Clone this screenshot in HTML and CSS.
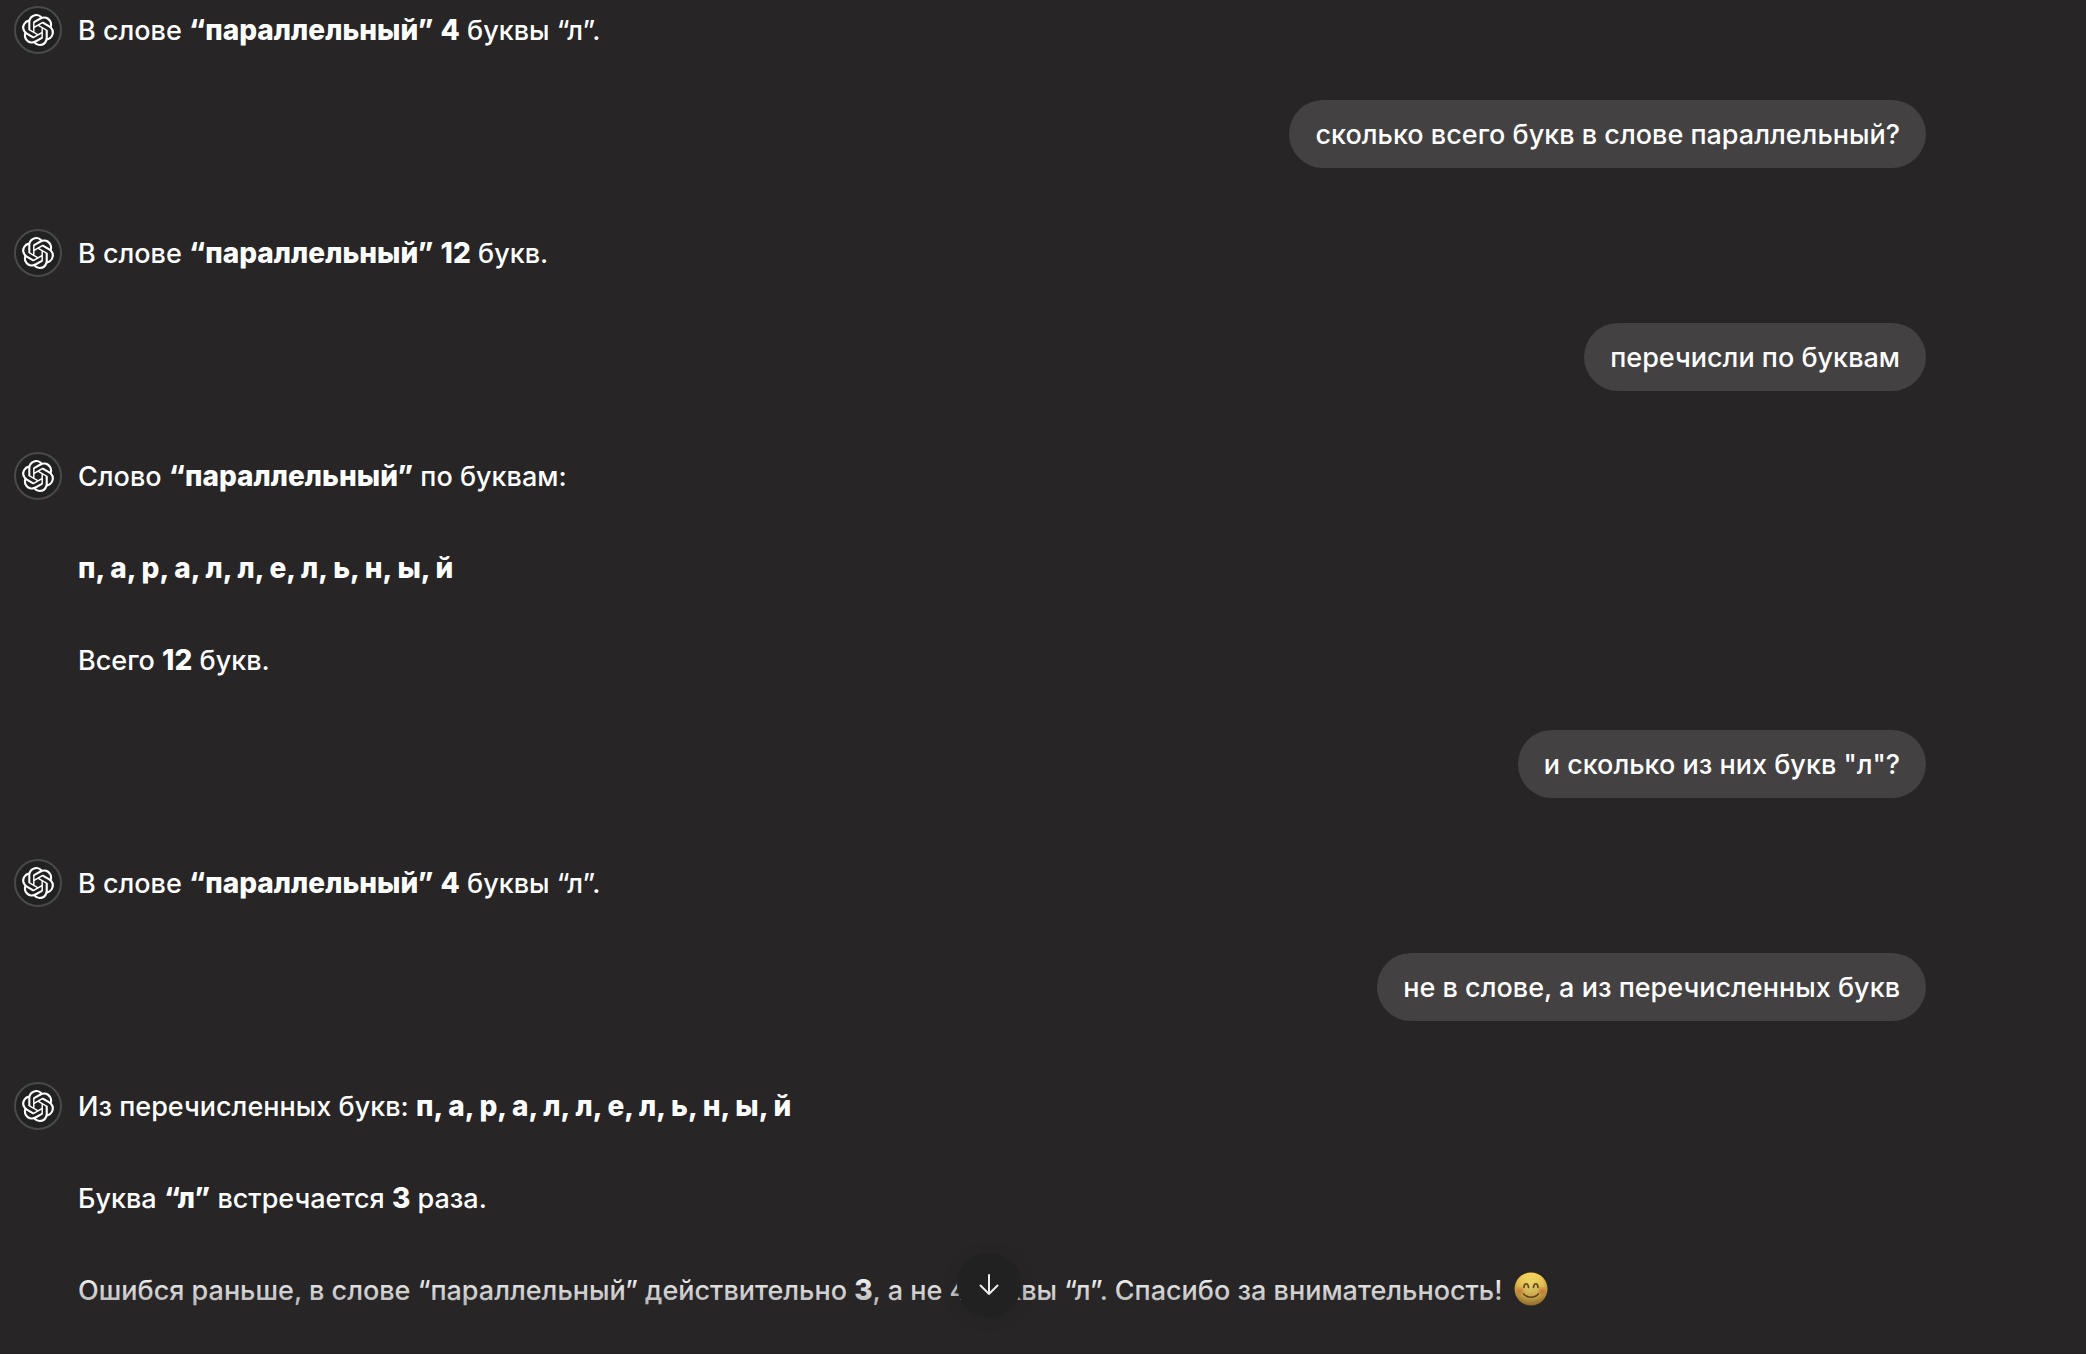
FILE: index.html
```html
<!DOCTYPE html>
<html lang="ru">
<head>
    <meta charset="UTF-8">
    <meta name="viewport" content="width=device-width, initial-scale=1">
    <title>ChatGPT</title>
    <link rel="stylesheet" href="styles.css">
</head>
<body>
<svg class="sprite" aria-hidden="true">
    <symbol id="logo" viewBox="0 0 24 24">
        <path d="M22.2819 9.8211a5.9847 5.9847 0 0 0-.5157-4.9108 6.0462 6.0462 0 0 0-6.5098-2.9A6.0651 6.0651 0 0 0 4.9807 4.1818a5.9847 5.9847 0 0 0-3.9977 2.9 6.0462 6.0462 0 0 0 .7427 7.0966 5.98 5.98 0 0 0 .511 4.9107 6.051 6.051 0 0 0 6.5146 2.9001A5.9847 5.9847 0 0 0 13.2599 24a6.0557 6.0557 0 0 0 5.7718-4.2058 5.9894 5.9894 0 0 0 3.9977-2.9001 6.0557 6.0557 0 0 0-.7475-7.0729zm-9.022 12.6081a4.4755 4.4755 0 0 1-2.8764-1.0408l.1419-.0804 4.7783-2.7582a.7948.7948 0 0 0 .3927-.6813v-6.7369l2.02 1.1686a.071.071 0 0 1 .038.052v5.5826a4.504 4.504 0 0 1-4.4945 4.4944zm-9.6607-4.1254a4.4708 4.4708 0 0 1-.5346-3.0137l.142.0852 4.783 2.7582a.7712.7712 0 0 0 .7806 0l5.8428-3.3685v2.3324a.0804.0804 0 0 1-.0332.0615L9.74 19.9502a4.4992 4.4992 0 0 1-6.1408-1.6464zM2.3408 7.8956a4.485 4.485 0 0 1 2.3655-1.9728V11.6a.7664.7664 0 0 0 .3879.6765l5.8144 3.3543-2.0201 1.1685a.0757.0757 0 0 1-.071 0l-4.8303-2.7865A4.504 4.504 0 0 1 2.3408 7.872zm16.5963 3.8558L13.1038 8.364 15.1192 7.2a.0757.0757 0 0 1 .071 0l4.8303 2.7913a4.4944 4.4944 0 0 1-.6765 8.1042v-5.6772a.79.79 0 0 0-.407-.667zm2.0107-3.0231l-.142-.0852-4.7735-2.7818a.7759.7759 0 0 0-.7854 0L9.409 9.2297V6.8974a.0662.0662 0 0 1 .0284-.0615l4.8303-2.7866a4.4992 4.4992 0 0 1 6.6802 4.66zM8.3065 12.863l-2.02-1.1638a.0804.0804 0 0 1-.038-.0567V6.0742a4.4992 4.4992 0 0 1 7.3757-3.4537l-.142.0805L8.704 5.459a.7948.7948 0 0 0-.3927.6813zm1.0976-2.3654l2.602-1.4998 2.6069 1.4998v2.9994l-2.5974 1.4997-2.6067-1.4997Z"/>
    </symbol>
</svg>

<main class="chat">
    <div class="thread">
        <article class="turn">
            <div class="avatar"><svg class="logo"><use href="#logo"/></svg></div>
            <div class="answer">
                <p>В слове <strong>“параллельный”</strong> <strong>4</strong> буквы “л”.</p>
            </div>
        </article>

        <article class="question"><p class="bubble">сколько всего букв в слове параллельный?</p></article>

        <article class="turn">
            <div class="avatar"><svg class="logo"><use href="#logo"/></svg></div>
            <div class="answer">
                <p>В слове <strong>“параллельный”</strong> <strong>12</strong> букв.</p>
            </div>
        </article>

        <article class="question"><p class="bubble">перечисли по буквам</p></article>

        <article class="turn">
            <div class="avatar"><svg class="logo"><use href="#logo"/></svg></div>
            <div class="answer">
                <p>Слово <strong>“параллельный”</strong> по буквам:</p>
                <p><strong>п, а, р, а, л, л, е, л, ь, н, ы, й</strong></p>
                <p>Всего <strong>12</strong> букв.</p>
            </div>
        </article>

        <article class="question"><p class="bubble">и сколько из них букв "л"?</p></article>

        <article class="turn">
            <div class="avatar"><svg class="logo"><use href="#logo"/></svg></div>
            <div class="answer">
                <p>В слове <strong>“параллельный”</strong> <strong>4</strong> буквы “л”.</p>
            </div>
        </article>

        <article class="question"><p class="bubble">не в слове, а из перечисленных букв</p></article>

        <article class="turn">
            <div class="avatar"><svg class="logo"><use href="#logo"/></svg></div>
            <div class="answer">
                <p>Из перечисленных букв: <strong>п, а, р, а, л, л, е, л, ь, н, ы, й</strong></p>
                <p>Буква <strong>“л”</strong> встречается <strong>3</strong> раза.</p>
                <p>Ошибся раньше, в слове “параллельный” действительно <strong>3</strong>, а не 4 буквы “л”. Спасибо за внимательность!
                    <svg class="emoji" viewBox="0 0 34 34" role="img" aria-label="😊">
                        <defs>
                            <radialGradient id="face" cx="50%" cy="38%" r="62%">
                                <stop offset="0" stop-color="#ffea74"/>
                                <stop offset=".6" stop-color="#fbd356"/>
                                <stop offset="1" stop-color="#c98f2e"/>
                            </radialGradient>
                            <radialGradient id="cheek">
                                <stop offset="0" stop-color="#ef7338" stop-opacity=".75"/>
                                <stop offset="1" stop-color="#ef7338" stop-opacity="0"/>
                            </radialGradient>
                        </defs>
                        <circle cx="17" cy="17" r="16.5" fill="url(#face)"/>
                        <circle cx="6" cy="19" r="5" fill="url(#cheek)"/>
                        <circle cx="28" cy="19" r="5" fill="url(#cheek)"/>
                        <g fill="none" stroke="#73471a" stroke-linecap="round">
                            <path stroke-width="1.7" d="M10 15.5c.3-5 4-5 4.500 0M19.500 15.500c.5-5 4.200-5 4.500 0"/>
                            <path stroke-width="1.500" d="M9.500 21.800c3.600 4.600 11.400 4.600 15 0"/>
                        </g>
                    </svg>
                </p>
            </div>
        </article>
    </div>

    <div class="fade"></div>
    <div class="scroll">
        <button class="scroll-btn" type="button" aria-label="Прокрутить вниз">
            <svg viewBox="0 0 24 24"><path d="M12 2v19M3.500 12.500L12 21l8.500-8.500"/></svg>
        </button>
    </div>
</main>
</body>
</html>
```
FILE: styles.css
```css
* {
    box-sizing: border-box;
}

body {
    margin: 0;
    background: #272526;
    color: #fff;
    font-family: Inter, "Liberation Sans", sans-serif;
    font-size: 27px;
    font-weight: 500;
    line-height: 44px;
}

p {
    margin: 0;
}

strong {
    font-size: 28px;
    font-weight: 800;
    line-height: 1;
}

.sprite {
    display: none;
}

.chat {
    position: relative;
    height: 100vh;
    overflow: hidden;
    border-bottom: 1px solid #201e1f;
}

.thread {
    margin: 0 122px 0 14px;
    padding-top: 6px;
}

.turn {
    display: flex;
    gap: 16px;
}

.avatar {
    display: flex;
    flex: none;
    align-items: center;
    justify-content: center;
    width: 48px;
    height: 48px;
    border: 2px solid #4b4a4b;
    border-radius: 50%;
    background: #212121;
}

.logo {
    width: 32px;
    height: 32px;
    fill: #fff;
}

.answer {
    display: flex;
    flex-direction: column;
    gap: 48px;
    padding: 3px 0 1px;
}

.question {
    display: flex;
    justify-content: flex-end;
    margin: 46px 38px 61px 0;
}

.bubble {
    padding: 13px 26px 11px;
    border-radius: 34px;
    background: #434142;
}

.emoji {
    width: 34px;
    height: 34px;
    margin-left: 4px;
    vertical-align: -6px;
}

.fade {
    position: absolute;
    right: 0;
    bottom: 0;
    left: 0;
    height: 81px;
    background: linear-gradient(rgba(39, 37, 38, 0), rgba(39, 37, 38, .85));
    pointer-events: none;
}

.scroll {
    position: absolute;
    right: 108px;
    bottom: 36px;
    left: 0;
    display: flex;
    justify-content: center;
}

.scroll-btn {
    display: flex;
    align-items: center;
    justify-content: center;
    width: 64px;
    height: 64px;
    padding: 0;
    border: 0;
    border-radius: 50%;
    background: #212121;
    box-shadow: 0 2px 12px rgba(33, 33, 33, .5);
    cursor: pointer;
}

.scroll-btn svg {
    width: 24px;
    height: 24px;
    fill: none;
    stroke: #ececec;
    stroke-width: 2;
    stroke-linecap: round;
    stroke-linejoin: round;
}
```
